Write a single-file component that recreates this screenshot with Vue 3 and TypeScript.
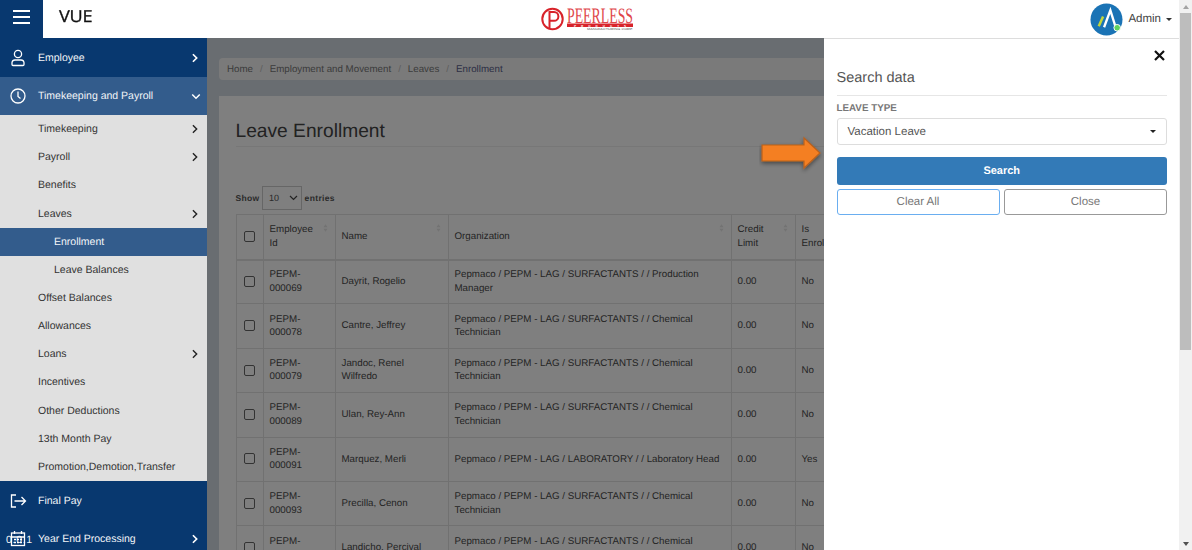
<script setup lang="ts">
interface Row { id: string[]; name: string; org: string[]; limit: string; enrolled: string }

const subItems: { label: string; arrow?: boolean; child?: boolean; active?: boolean }[] = [
  { label: 'Timekeeping', arrow: true },
  { label: 'Payroll', arrow: true },
  { label: 'Benefits' },
  { label: 'Leaves', arrow: true },
  { label: 'Enrollment', child: true, active: true },
  { label: 'Leave Balances', child: true },
  { label: 'Offset Balances' },
  { label: 'Allowances' },
  { label: 'Loans', arrow: true },
  { label: 'Incentives' },
  { label: 'Other Deductions' },
  { label: '13th Month Pay' },
  { label: 'Promotion,Demotion,Transfer' },
]

const chem = ['Pepmaco / PEPM - LAG / SURFACTANTS / / Chemical', 'Technician']
const rows: Row[] = [
  { id: ['PEPM-', '000069'], name: 'Dayrit, Rogelio', org: ['Pepmaco / PEPM - LAG / SURFACTANTS / / Production', 'Manager'], limit: '0.00', enrolled: 'No' },
  { id: ['PEPM-', '000078'], name: 'Cantre, Jeffrey', org: chem, limit: '0.00', enrolled: 'No' },
  { id: ['PEPM-', '000079'], name: 'Jandoc, Renel Wilfredo', org: chem, limit: '0.00', enrolled: 'No' },
  { id: ['PEPM-', '000089'], name: 'Ulan, Rey-Ann', org: chem, limit: '0.00', enrolled: 'No' },
  { id: ['PEPM-', '000091'], name: 'Marquez, Merli', org: ['Pepmaco / PEPM - LAG / LABORATORY / / Laboratory Head'], limit: '0.00', enrolled: 'Yes' },
  { id: ['PEPM-', '000093'], name: 'Precilla, Cenon', org: chem, limit: '0.00', enrolled: 'No' },
  { id: ['PEPM-', '000094'], name: 'Landicho, Percival', org: chem, limit: '0.00', enrolled: 'No' },
]
</script>

<template>
  <div class="page">
    <div class="viewport">
      <header class="topbar">
        <button class="burger" aria-label="Menu"><span></span><span></span><span></span></button>
        <div class="brand">VUE</div>
        <svg class="logo" width="94" height="24" viewBox="0 0 94 24">
          <circle cx="12.5" cy="12" r="10.2" fill="none" stroke="#d8232a" stroke-width="2" />
          <path d="M9.5 21.500V5h4.500a4.300 4.300 0 0 1 0 8.800H9.500" fill="none" stroke="#d8232a" stroke-width="2" />
          <text class="logo-name" x="27" y="16" textLength="66" lengthAdjust="spacingAndGlyphs">PEERLESS</text>
          <rect x="27" y="16.500" width="66" height="3.500" fill="#d8232a" />
          <text class="logo-sub" x="34" y="19.500" textLength="52" lengthAdjust="spacing">PRODUCTS</text>
          <text class="logo-tiny" x="47" y="23.300" textLength="46" lengthAdjust="spacingAndGlyphs">MANUFACTURING CORP.</text>
        </svg>
        <div class="user">
          <svg class="avatar" width="33" height="33" viewBox="0 0 34 34">
            <circle cx="17" cy="17" r="16.500" fill="#1a73b5" />
            <path d="M9 24l4.500-10" stroke="#c3d63a" stroke-width="2.600" fill="none" />
            <path d="M14.500 25L21 7.500l5 16" stroke="#fff" stroke-width="2.400" fill="none" />
            <circle cx="28" cy="25.500" r="3.400" fill="#5fd35f" stroke="#fff" stroke-width="1" />
          </svg>
          <span class="admin">Admin</span>
          <span class="caret"></span>
        </div>
      </header>

      <div class="body">
        <aside class="sidebar">
          <a class="nav">
            <svg class="nav-icon" width="18" height="18" viewBox="0 0 18 18" fill="none" stroke="#fff" stroke-width="1.300">
              <circle cx="9" cy="5" r="3.600" />
              <path d="M3 13.500a3 3 0 0 1 3-2.500h6a3 3 0 0 1 3 2.500v2a1 1 0 0 1-1 1H4a1 1 0 0 1-1-1z" />
            </svg>
            <span>Employee</span>
            <svg class="chev" width="8" height="10" viewBox="0 0 8 12" fill="none" stroke="#fff" stroke-width="2"><path d="M1.500 1.500L6 6l-4.500 4.500" /></svg>
          </a>
          <a class="nav open">
            <svg class="nav-icon" width="18" height="18" viewBox="0 0 18 18" fill="none" stroke="#fff" stroke-width="1.300">
              <circle cx="9" cy="9" r="7" />
              <path d="M9 4.500V9.500l2.500 2" />
            </svg>
            <span>Timekeeping and Payroll</span>
            <svg class="chev down" width="10" height="7" viewBox="0 0 12 8" fill="none" stroke="#fff" stroke-width="1.800"><path d="M1.500 1.500L6 6l4.500-4.500" /></svg>
          </a>
          <ul class="sub">
            <li v-for="item in subItems" :key="item.label" :class="{ child: item.child, active: item.active }">
              <span>{{ item.label }}</span>
              <svg v-if="item.arrow" class="chev" width="8" height="10" viewBox="0 0 8 12" fill="none" stroke="#222" stroke-width="1.700"><path d="M1.500 1.500L6 6l-4.500 4.500" /></svg>
            </li>
          </ul>
          <a class="nav">
            <svg class="nav-icon" width="18" height="18" viewBox="0 0 18 18" fill="none" stroke="#fff" stroke-width="1.300">
              <path d="M7 3H2.500v12H7" />
              <path d="M5.500 9h11M12.500 5l4 4-4 4" />
            </svg>
            <span>Final Pay</span>
          </a>
          <a class="nav">
            <span class="version">0.0.1</span>
            <svg class="nav-icon" width="18" height="18" viewBox="0 0 18 18" fill="none" stroke="#fff" stroke-width="1.300">
              <rect x="2.500" y="3" width="13" height="12.500" />
              <path d="M2.500 7h13M5.500 1v3M12.500 1v3" />
              <path d="M5 9.500h2M8 9.500h2M11 9.500h2M5 12.500h2M8 12.500h2M11 12.500h2" stroke-width="1.500" />
            </svg>
            <span>Year End Processing</span>
            <svg class="chev" width="8" height="10" viewBox="0 0 8 12" fill="none" stroke="#fff" stroke-width="2"><path d="M1.500 1.500L6 6l-4.500 4.500" /></svg>
          </a>
        </aside>

        <main class="content">
          <nav class="crumbs">
            <span>Home</span><i>/</i><span>Employment and Movement</span><i>/</i><span>Leaves</span><i>/</i><span class="current">Enrollment</span>
          </nav>
          <section class="card">
            <h1>Leave Enrollment</h1>
            <div class="length">
              <b>Show</b>
              <span class="len-select">10
                <svg width="9" height="6" viewBox="0 0 9 6" fill="none" stroke="#444" stroke-width="1.200"><path d="M1 1l3.500 3.500L8 1" /></svg>
              </span>
              <b>entries</b>
            </div>
            <table>
              <colgroup>
                <col style="width: 27px" /><col style="width: 72px" /><col style="width: 113px" /><col style="width: 283px" /><col style="width: 64px" /><col style="width: 60px" />
              </colgroup>
              <thead>
                <tr>
                  <th class="cb"><span class="box"></span></th>
                  <th><div class="th-in"><span>Employee<br />Id</span><svg class="sort" width="5" height="8" viewBox="0 0 6 9"><path d="M3 0l2.500 3.500h-5zM3 9L.5 5.500h5z" /></svg></div></th>
                  <th><div class="th-in"><span>Name</span><svg class="sort" width="5" height="8" viewBox="0 0 6 9"><path d="M3 0l2.500 3.500h-5zM3 9L.5 5.500h5z" /></svg></div></th>
                  <th><div class="th-in"><span>Organization</span><svg class="sort" width="5" height="8" viewBox="0 0 6 9"><path d="M3 0l2.500 3.500h-5zM3 9L.5 5.500h5z" /></svg></div></th>
                  <th><div class="th-in"><span>Credit<br />Limit</span><svg class="sort" width="5" height="8" viewBox="0 0 6 9"><path d="M3 0l2.500 3.500h-5zM3 9L.5 5.500h5z" /></svg></div></th>
                  <th><div class="th-in"><span>Is<br />Enrolled</span></div></th>
                </tr>
              </thead>
              <tbody>
                <tr v-for="r in rows" :key="r.id[1]">
                  <td class="cb"><span class="box"></span></td>
                  <td><template v-for="l in r.id" :key="l">{{ l }}<br /></template></td>
                  <td class="name">{{ r.name }}</td>
                  <td><template v-for="l in r.org" :key="l">{{ l }}<br /></template></td>
                  <td>{{ r.limit }}</td>
                  <td>{{ r.enrolled }}</td>
                </tr>
              </tbody>
            </table>
          </section>
          <div class="dim"></div>
          <svg class="pointer" width="66" height="40" viewBox="0 0 66 40">
            <defs>
              <filter id="sh" x="-20%" y="-20%" width="140%" height="150%"><feDropShadow dx="0" dy="2" stdDeviation="2" flood-color="#000" flood-opacity=".45" /></filter>
            </defs>
            <path d="M3 11h42V4l16 15-16 15v-7H3z" fill="#f47f24" stroke="#b9601b" stroke-width="1.200" filter="url(#sh)" />
          </svg>
          <aside class="panel">
            <div class="close-row">
              <svg width="11" height="11" viewBox="0 0 11 11" stroke="#111" stroke-width="2.200"><path d="M1 1l9 9M10 1l-9 9" /></svg>
            </div>
            <h2>Search data</h2>
            <label>LEAVE TYPE</label>
            <div class="select">Vacation Leave<span class="caret small"></span></div>
            <button class="search">Search</button>
            <div class="btns">
              <button class="ghost focus">Clear All</button>
              <button class="ghost">Close</button>
            </div>
          </aside>
        </main>
      </div>
    </div>

    <div class="scrollbar">
      <span class="sb-btn"><i class="up"></i></span>
      <span class="thumb"></span>
      <span class="sb-btn"><i class="dn"></i></span>
    </div>
  </div>
</template>

<style>
html, body { margin: 0; overflow: hidden; }
</style>

<style scoped>
* { box-sizing: border-box; }
.page {
  width: 1192px; height: 550px; display: flex; overflow: hidden; background: #fff;
  font-family: "Liberation Sans", Arial, sans-serif; font-size: 10.500px; text-rendering: geometricPrecision;
}
.viewport { width: 1179px; height: 550px; display: flex; flex-direction: column; }

.topbar { height: 38px; flex: none; display: flex; align-items: center; background: #fff; position: relative; }
.burger {
  width: 43px; height: 38px; border: 0; padding: 0 0 4px; background: #08386f; display: flex;
  flex-direction: column; align-items: center; justify-content: center; gap: 4px;
}
.burger span { width: 17px; height: 2px; background: #fff; display: block; }
.brand { margin: 0 0 7px 16px; font-size: 16.500px; color: #111; letter-spacing: -.2px; font-family: "Open Sans", sans-serif; -webkit-text-stroke: .3px #111; transform: scaleX(1.100); transform-origin: left; }
.logo { margin-left: 451px; margin-bottom: 0; }
.logo-name { font-family: "Liberation Serif", serif; font-size: 22px; fill: #e0464b; }
.logo-sub { font-family: "Liberation Sans", sans-serif; font-size: 3px; font-weight: 700; fill: #fff; }
.logo-tiny { font-family: "Liberation Sans", sans-serif; font-size: 3px; fill: #555; }
.user { margin-left: auto; display: flex; align-items: center; padding-right: 7px; }
.admin { margin-left: 5.500px; font-size: 11.500px; color: #444; }
.caret { margin-left: 5px; width: 0; height: 0; border-left: 3.500px solid transparent; border-right: 3.500px solid transparent; border-top: 3.500px solid #333; }

.body { flex: 1; display: flex; min-height: 0; }
.sidebar { width: 207px; flex: none; background: #08386f; display: flex; flex-direction: column; overflow: hidden; font-size: 10.500px; }
.nav { height: 38.500px; flex: none; display: flex; align-items: center; padding: 1px 8px 0 9px; color: #f2f5f8; position: relative; }
.nav.open { background: #335c8c; }
.nav-icon { flex: none; margin-right: 11px; position: relative; }
.nav .chev { margin-left: auto; }
.nav .chev.down { margin-right: -2px; }
.version { position: absolute; left: 6px; top: 14px; letter-spacing: .7px; font-size: 10.500px; }
.sub { list-style: none; margin: 0; padding: 0; background: #e0e0e0; color: #333; }
.sub li { height: 28.170px; display: flex; align-items: center; padding: 0 8px 0 38px; }
.sub li.child { padding-left: 54px; }
.sub li.active { background: #335c8c; color: #f2f5f8; }
.sub .chev { margin-left: auto; }

.content { flex: 1; min-width: 0; position: relative; overflow: hidden; background: #d2dbe2; padding: 20px 0 0 12px; color: #555; font-size: 9.750px; }
.crumbs { height: 22px; background: #f5f5f5; border-radius: 4px; padding-left: 8px; display: flex; align-items: center; color: #777; }
.crumbs i { font-style: normal; color: #bbb; margin: 0 7px; }
.crumbs .current { color: #5a5f8a; }
.card { margin-top: 16px; background: #fff; padding: 23px 16px 0 16.500px; height: 520px; }
h1 { margin: 0; padding-bottom: 2px; font-size: 19.200px; font-weight: 400; line-height: 25px; color: #444; border-bottom: 1px solid #eee; }
.length { margin-top: 39px; height: 24px; display: flex; align-items: center; gap: 2.500px; font-size: 8.500px; letter-spacing: .35px; color: #555; }
.len-select { width: 40px; height: 24px; border: 1px solid #ccc; display: flex; align-items: center; justify-content: space-between; padding: 0 3px 0 6px; font-size: 9px; letter-spacing: 0; }
table { margin-top: 4px; width: 619px; table-layout: fixed; border-collapse: collapse; color: #4a4a4a; line-height: 13.500px; }
th, td { border: 1px solid #e2e2e2; padding: 0 6px; text-align: left; font-weight: 400; white-space: nowrap; overflow: hidden; vertical-align: middle; }
td.name { white-space: normal; }
thead tr { height: 45px; }
thead th { border-bottom-width: 2px; }
tbody tr { height: 44.400px; }
.cb { padding: 0; text-align: center; }
.box { display: inline-block; width: 11px; height: 11px; border: 1.300px solid #666; border-radius: 2px; background: #fff; vertical-align: middle; }
.th-in { display: flex; align-items: center; justify-content: space-between; min-height: 27px; }
.sort { fill: #e6e6e6; margin-top: 1px; flex: none; align-self: flex-start; margin-right: 1px; }

.dim { position: absolute; inset: 0; background: rgba(0, 0, 0, .5); }
.pointer { position: absolute; left: 552px; top: 96px; }

.panel {
  position: absolute; top: 0; right: 0; bottom: 0; width: 355px; background: #fff;
  border-top: 1px solid #ddd; padding: 0 12px 0 12.500px; color: #555;
}
.close-row { height: 21px; margin-top: 6px; display: flex; justify-content: flex-end; align-items: center; padding-right: 2px; }
h2 { margin: 0; height: 30px; padding-top: 2px; font-size: 14.500px; line-height: 20px; font-weight: 400; color: #555; border-bottom: 1.500px solid #e6e6e6; }
label { display: block; margin-top: 7px; height: 12px; line-height: 12px; font-size: 9.800px; font-weight: 700; color: #777; }
.select { margin-top: 3px; height: 27px; border: 1px solid #ddd; border-radius: 3px; display: flex; align-items: center; justify-content: space-between; padding: 0 10px; font-size: 11.500px; color: #555; }
.caret.small { border-top-color: #222; margin-left: 0; }
button { font-family: inherit; text-rendering: inherit; }
.search { margin-top: 12px; display: block; width: 100%; height: 27.500px; border: 0; border-radius: 3px; background: #337ab7; color: #fff; font-size: 11px; font-weight: 700; }
.btns { display: flex; gap: 4.500px; margin-top: 4px; }
.ghost { flex: 1; height: 26.500px; background: #fff; border: 1px solid #999; border-radius: 3px; color: #777; font-size: 11.500px; padding: 0; }
.ghost.focus { border-color: #6aaef0; }

.scrollbar { width: 13px; flex: none; background: #f1f1f1; display: flex; flex-direction: column; align-items: center; }
.sb-btn { height: 13px; width: 13px; flex: none; display: flex; align-items: center; justify-content: center; }
.thumb { width: 11px; height: 337px; background: #bdbdbd; }
.sb-btn:last-child { margin-top: auto; }
.up, .dn { width: 0; height: 0; border-left: 3.500px solid transparent; border-right: 3.500px solid transparent; }
.up { border-bottom: 4px solid #a3a3a3; }
.dn { border-top: 4px solid #505050; }
</style>
